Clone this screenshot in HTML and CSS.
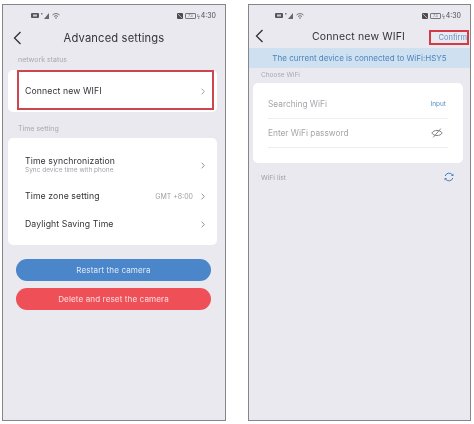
FILE: index.html
```html
<!DOCTYPE html>
<html lang="en">
<head>
<meta charset="utf-8">
<title>Camera settings</title>
<link rel="stylesheet" href="styles.css">
</head>
<body>
<main class="page">
  <section class="phone phone-left">
    <div class="status status-left">
      <div class="status-group">
        <svg class="st-sim" width="8" height="5" viewBox="0 0 8 5"><rect width="8" height="5" rx="1" fill="#55555c"/><rect x="2" y="1.5" width="4" height="2" fill="#c9c9cf"/></svg>
        <svg width="9" height="6" viewBox="0 0 9 6"><rect x="0" y="0" width="1.5" height="1.5" fill="#77777d"/><path d="M3 6 L8 0 V6 Z" fill="#66666c"/></svg>
        <svg width="8" height="6" viewBox="0 0 8 6"><path d="M.5 2 A5 5 0 0 1 7.5 2 M2 3.5 A3 3 0 0 1 6 3.5" fill="none" stroke="#66666c" stroke-width=".9"/><circle cx="4" cy="5" r=".8" fill="#66666c"/></svg>
      </div>
      <div class="status-group status-right">
        <svg width="6" height="6" viewBox="0 0 6 6"><rect width="6" height="6" rx="1" fill="#4c4c52"/><path d="M1 1 L5 5" stroke="#ccc" stroke-width=".8"/></svg>
        <span class="battery">73</span><span class="bolt">ϟ</span><span class="clock">4:30</span>
      </div>
    </div>
    <header class="nav nav-left">
      <svg class="back" width="9" height="14" viewBox="0 0 9 14"><path d="M7.5 1 L1.5 7 L7.5 13" fill="none" stroke="#303036" stroke-width="1.3"/></svg>
      <h1 class="title">Advanced settings</h1>
    </header>
    <p class="section-label label-network">network status</p>
    <div class="card card-wifi">
      <div class="row row-connect"><span class="row-title">Connect new WIFI</span>
        <svg class="chev" width="4" height="7" viewBox="0 0 4 7"><path d="M.7 .7 L3.3 3.5 L.7 6.3" fill="none" stroke="#8b8b90" stroke-width=".8"/></svg></div>
      <div class="red-box red-connect"></div>
    </div>
    <p class="section-label label-time">Time setting</p>
    <div class="card card-time">
      <div class="row row-sync">
        <div class="row-stack"><span class="row-title">Time synchronization</span><span class="row-sub">Sync device time with phone</span></div>
        <svg class="chev" width="4" height="7" viewBox="0 0 4 7"><path d="M.7 .7 L3.3 3.5 L.7 6.3" fill="none" stroke="#77777c" stroke-width=".8"/></svg>
      </div>
      <div class="row row-zone"><span class="row-title">Time zone setting</span>
        <div class="row-end"><span class="row-value">GMT +8:00</span>
        <svg class="chev" width="4" height="7" viewBox="0 0 4 7"><path d="M.7 .7 L3.3 3.5 L.7 6.3" fill="none" stroke="#77777c" stroke-width=".8"/></svg></div>
      </div>
      <div class="row row-dst"><span class="row-title">Daylight Saving Time</span>
        <svg class="chev" width="4" height="7" viewBox="0 0 4 7"><path d="M.7 .7 L3.3 3.5 L.7 6.3" fill="none" stroke="#77777c" stroke-width=".8"/></svg></div>
    </div>
    <div class="actions">
      <button class="btn btn-blue" type="button">Restart the camera</button>
      <button class="btn btn-red" type="button">Delete and reset the camera</button>
    </div>
  </section>

  <section class="phone phone-right">
    <div class="status status-r">
      <div class="status-group">
        <svg class="st-sim" width="8" height="5" viewBox="0 0 8 5"><rect width="8" height="5" rx="1" fill="#55555c"/><rect x="2" y="1.5" width="4" height="2" fill="#c9c9cf"/></svg>
        <svg width="9" height="6" viewBox="0 0 9 6"><rect x="0" y="0" width="1.5" height="1.5" fill="#77777d"/><path d="M3 6 L8 0 V6 Z" fill="#66666c"/></svg>
        <svg width="8" height="6" viewBox="0 0 8 6"><path d="M.5 2 A5 5 0 0 1 7.5 2 M2 3.5 A3 3 0 0 1 6 3.5" fill="none" stroke="#66666c" stroke-width=".9"/><circle cx="4" cy="5" r=".8" fill="#66666c"/></svg>
      </div>
      <div class="status-group status-right">
        <svg width="6" height="6" viewBox="0 0 6 6"><rect width="6" height="6" rx="1" fill="#4c4c52"/><path d="M1 1 L5 5" stroke="#ccc" stroke-width=".8"/></svg>
        <span class="battery">73</span><span class="bolt">ϟ</span><span class="clock">4:30</span>
      </div>
    </div>
    <header class="nav nav-right">
      <svg class="back" width="9" height="14" viewBox="0 0 9 14"><path d="M7.5 1 L1.5 7 L7.5 13" fill="none" stroke="#303036" stroke-width="1.3"/></svg>
      <h1 class="title title-wifi">Connect new WIFI</h1>
      <span class="confirm">Confirm</span>
    </header>
    <div class="banner">The current device is connected to WiFi:HSY5</div>
    <p class="section-label label-choose">Choose WiFi</p>
    <div class="card card-form">
      <div class="form-row"><span class="placeholder">Searching WiFi</span><span class="input-link">Input</span></div>
      <div class="form-row"><span class="placeholder">Enter WiFi password</span>
        <svg class="eye" width="12" height="10" viewBox="0 0 12 10"><path d="M.8 5 C3 1.6 9 1.6 11.2 5 C9 8.4 3 8.4 .8 5 Z M2.2 9.4 L9.8 .6" fill="none" stroke="#77777c" stroke-width=".9"/></svg>
      </div>
    </div>
    <div class="list-head"><span class="section-label-inline">WiFi list</span>
      <svg width="10" height="10" viewBox="0 0 10 10"><path d="M1.2 4 A4 4 0 0 1 8.4 3 M8.8 6 A4 4 0 0 1 1.6 7" fill="none" stroke="#3f7fbe" stroke-width="1"/><path d="M9.4 1.6 V4 H7 Z M.6 8.4 V6 H3 Z" fill="#3f7fbe"/></svg>
    </div>
  </section>
</main>
</body>
</html>
```
FILE: styles.css
```css
* { box-sizing: border-box; }
html, body { margin: 0; padding: 0; background: #fff; }
body { font-family: "Inter", "Noto Sans", "Liberation Sans", sans-serif; }
.page { width: 474px; height: 424px; padding: 4px 3px 3px 2px; display: flex; justify-content: space-between; overflow: hidden; }
.phone { width: 224px; height: 417px; background: #e9e9ef; border: 1px solid #85858a; border-right-width: 1.5px; display: flex; flex-direction: column; filter: blur(.4px); }
.phone-right { width: 223px; }
p, h1 { margin: 0; }

.status { display: flex; justify-content: space-between; align-items: center; height: 9px; margin-top: 6px; }
.status-left { padding: 0 9px 0 28px; }
.status-r { padding: 0 9px 0 26px; }
.status-group { display: flex; align-items: center; gap: 2px; }
.battery { width: 11px; height: 6px; border: 1px solid #77777d; border-radius: 1px; font-size: 4px; line-height: 4px; text-align: center; color: #66666c; }
.bolt { font-size: 5px; color: #55555a; margin: 0 -1px; }
.clock { font-size: 7px; color: #4c4c52; }

.nav { position: relative; display: flex; align-items: center; justify-content: center; }
.nav-left { height: 26px; margin-top: 5px; }
.nav-right { height: 24px; margin-top: 4px; }
.back { position: absolute; left: 10px; top: 6px; }
.nav-right .back { left: 6px; top: 5px; }
.title { font-size: 11.2px; font-weight: 400; color: #34343a; letter-spacing: .15px; white-space: nowrap; }
.title-wifi { font-size: 10.5px; margin-right: 2px; }
.confirm { position: absolute; right: 1px; top: 6px; width: 40px; height: 15px; border: 2px solid #d53a47; font-size: 7.5px; line-height: 11px; text-align: right; color: #5f93cb; white-space: nowrap; }

.section-label { font-size: 7px; color: #a8a8ae; line-height: 8px; }
.label-network { margin: 5px 0 0 15px; }
.label-time { margin: 13px 0 0 15px; }
.label-choose { font-size: 6.5px; margin: 3px 0 0 12px; }

.card { background: #fff; border-radius: 5px; }
.card-wifi { position: relative; height: 42px; margin: 6px 8px 0 5px; }
.red-box { position: absolute; left: 9px; right: 3px; top: 0; bottom: 2px; border: 2px solid #cc4652; }
.card-time { height: 107px; margin: 5px 8px 0 5px; padding: 0 12px 0 17px; display: flex; flex-direction: column; }

.row { display: flex; align-items: center; justify-content: space-between; }
.row-connect { height: 42px; padding: 0 12px 0 17px; margin-top: 0; }
.row-title { font-size: 8.7px; color: #333339; letter-spacing: .1px; white-space: nowrap; }
.row-stack { display: flex; flex-direction: column; gap: 1px; }
.row-sub { font-size: 6.5px; color: #a4a4aa; line-height: 7px; white-space: nowrap; }
.row-sync { height: 44px; padding-top: 10px; }
.row-zone { height: 28px; }
.row-dst { height: 28px; }
.row-end { display: flex; align-items: center; gap: 8px; }
.row-value { font-size: 7px; color: #a0a0a6; }

.actions { display: flex; flex-direction: column; gap: 7px; margin: 14px 0 0 13px; width: 195px; }
.btn { height: 22px; border: 0; border-radius: 11px; padding: 0; font: inherit; font-size: 8.1px; letter-spacing: .1px; color: #dfeaf6; }
.btn-blue { background: #4a86c9; }
.btn-red { background: #ef5058; color: #fbdcde; }

.banner { height: 20px; background: #cfe0f1; text-align: center; font-size: 8px; line-height: 20px; color: #4b84bd; white-space: nowrap; }
.card-form { height: 80px; margin: 4px 7px 0 4px; padding: 7px 15px 0; }
.form-row { height: 29px; display: flex; align-items: center; justify-content: space-between; border-bottom: 1px solid #eeeef1; }
.placeholder { font-size: 8.3px; color: #a5a5aa; }
.input-link { font-size: 6.5px; color: #5a8fc4; margin-right: 2px; }
.eye { margin-right: 5px; }
.list-head { display: flex; justify-content: space-between; align-items: center; padding: 0 16px 0 12px; margin-top: 9px; height: 10px; }
.section-label-inline { font-size: 6.8px; color: #a0a0a6; }
```
